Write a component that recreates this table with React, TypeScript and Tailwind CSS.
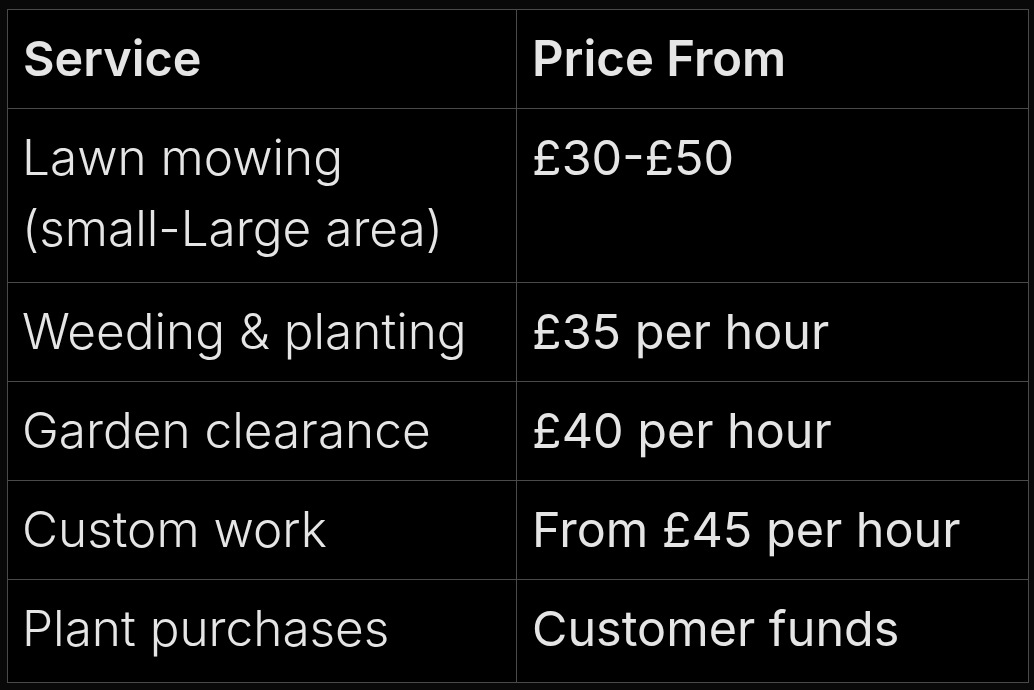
const rows: [string[], string][] = [
  [["Lawn mowing", "(small-Large area)"], "£30-£50"],
  [["Weeding & planting"], "£35 per hour"],
  [["Garden clearance"], "£40 per hour"],
  [["Custom work"], "From £45 per hour"],
  [["Plant purchases"], "Customer funds"],
];

export default function App() {
  return (
    <div
      className="w-[1034px] h-[690px] bg-[#090909] pt-[9px] pl-[7px]"
      style={{ fontFamily: "Inter, 'Liberation Sans', sans-serif" }}
    >
      <table className="w-[1022px] border-collapse bg-black text-[#e5e5e5]">
        <thead>
          <tr className="h-[99px]">
            <th className="w-[509px] border border-[#4a4a4a] pl-[15px] text-left align-middle text-[48.5px] font-semibold">
              Service
            </th>
            <th className="border border-[#4a4a4a] pl-[15px] text-left align-middle text-[49px] font-semibold">
              Price From
            </th>
          </tr>
        </thead>
        <tbody>
          {rows.map(([service, price], i) => {
            const pad =
              i === 0 ? "pt-[13px] pb-[18px]" : i === rows.length - 1 ? "pt-[13px] pb-[18px]" : "pt-[13px] pb-[14px]";
            return (
              <tr key={i}>
                <td className={`border border-[#4a4a4a] pl-[14px] align-top text-[49.5px] leading-[71px] font-light ${pad}`}>
                  {service.map((line) => (
                    <div key={line}>{line}</div>
                  ))}
                </td>
                <td className={`border border-[#4a4a4a] pl-[15px] align-top text-[48.5px] leading-[71px] ${pad}`}>
                  {price}
                </td>
              </tr>
            );
          })}
        </tbody>
      </table>
    </div>
  );
}
